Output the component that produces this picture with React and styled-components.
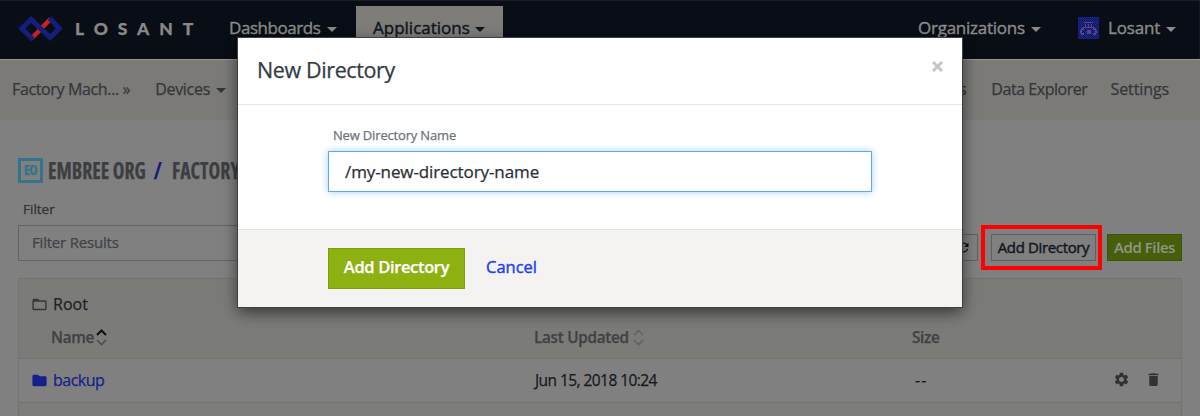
import React from 'react';
import styled, { createGlobalStyle } from 'styled-components';
import { MdSettings, MdDelete, MdFolder, MdFolderOpen, MdRefresh } from 'react-icons/md';

const GlobalStyle = createGlobalStyle`
  * { box-sizing: border-box; }
  body { margin: 0; background: #808080; font-family: "Open Sans", "Noto Sans", sans-serif; }
`;

const Page = styled.div`
  position: relative;
  width: 1200px;
  height: 416px;
  overflow: hidden;
  background: #808080;
  color: #14191f;
  font-size: 16px;
  font-weight: 400;
  -webkit-text-stroke: 0.25px currentColor;
  line-height: 22px;
  white-space: nowrap;
`;

const TopBar = styled.header`
  display: flex;
  height: 59px;
  padding-left: 18px;
  background: #080d16;
  border-top: 1px solid #1a1e25;
  border-right: 1px solid #14181f;
`;

const Brand = styled.div`
  display: flex;
  align-items: flex-start;
  width: 196px;
  svg { display: block; margin-top: 14px; }
`;

const BrandName = styled.span`
  margin: 17px 0 0 11px;
  color: #8a8987;
  font: 900 17.5px/22px Lato, sans-serif;
  letter-spacing: 9.9px;
`;

const MenuItem = styled.div`
  display: flex;
  align-items: center;
  height: 54px;
  margin-top: ${p => (p.$active ? 5 : 0)}px;
  padding: 0 ${p => (p.$active ? 17 : 15)}px ${p => (p.$active ? 10 : 0)}px;
  width: ${p => p.$width}px;
  background: ${p => (p.$active ? '#7e7d7a' : 'transparent')};
  color: ${p => (p.$active ? '#10151c' : '#8b8a88')};
  font-size: 17px;
  -webkit-text-stroke-width: 0.4px;
  letter-spacing: ${p => p.$track || 0}px;
`;

const Caret = styled.i`
  flex: none;
  width: 0;
  height: 0;
  margin: 3px 0 0 ${p => p.$gap || 7}px;
  border: 5px solid transparent;
  border-top-color: currentColor;
  border-bottom: 0;
`;

const AccountMenu = styled.div`
  display: flex;
  margin-left: auto;
`;

const Avatar = styled.svg`
  width: 21px;
  height: 22px;
  margin-right: 9px;
`;

const SubNav = styled.nav`
  display: flex;
  align-items: center;
  height: 61px;
  padding: 0 31px 3px 12px;
  border-top: 1px solid #969592;
  background: #7b7a77;
  color: #33363a;
`;

const SubNavItem = styled.span`
  display: flex;
  align-items: center;
  margin-right: ${p => p.$after || 0}px;
  margin-left: ${p => (p.$push ? 'auto' : 0)};
  letter-spacing: ${p => p.$track || 0}px;
`;

const Content = styled.main`
  padding: 36px 18px 0;
`;

const Heading = styled.h1`
  display: flex;
  align-items: center;
  height: 28px;
  margin: 0;
  color: #3c3e41;
`;

const OrgBadge = styled.span`
  display: flex;
  align-items: center;
  justify-content: center;
  width: 25px;
  height: 25px;
  border: 3px solid #34748a;
  color: #34748a;
  font: 700 14px/14px "Open Sans", sans-serif;
  font-stretch: 75%;
  letter-spacing: -0.6px;
`;

const Crumbs = styled.span`
  display: flex;
  margin-left: 5px;
  font-size: 23px;
  font-weight: 700;
  font-stretch: 75%;
  line-height: 28px;
  transform: scaleX(0.86);
  transform-origin: left center;
`;

const Slash = styled.span`
  margin: 0 12px 0 9px;
  color: #10197c;
`;

const FilterRow = styled.div`
  display: flex;
  justify-content: space-between;
  height: 77px;
  margin-top: 14px;
`;

const FilterField = styled.label`
  display: block;
  width: 420px;
  color: #2f3236;
  font-size: 13.5px;
  line-height: 22px;
  span { display: block; padding-left: 5px; }
`;

const FilterBox = styled.div`
  display: flex;
  align-items: center;
  height: 36px;
  margin-top: 5px;
  padding: 0 13px 2px;
  border: 1px solid #646466;
  color: #3f4247;
  font-size: 15px;
  letter-spacing: -0.2px;
`;

const Actions = styled.div`
  display: flex;
  align-items: flex-start;
  padding-top: 36px;
`;

const ToolButton = styled.button`
  display: flex;
  align-items: center;
  justify-content: center;
  width: ${p => p.$width}px;
  height: 27px;
  padding: 0 0 1px;
  border: 1px solid ${p => (p.$green ? '#3c5503' : '#5f6062')};
  background: ${p => (p.$green ? '#475f0a' : '#808080')};
  color: ${p => (p.$green ? '#92948b' : '#10161d')};
  font: ${p => (p.$green ? 600 : 400)} 15px/20px "Open Sans", sans-serif;
  -webkit-text-stroke: ${p => (p.$green ? 0 : 0.4)}px currentColor;
  letter-spacing: ${p => p.$track || 0}px;
`;

const Highlight = styled.div`
  width: 121px;
  height: 45px;
  margin: -9px 5px 0 3px;
  padding: 5px 0 0 6px;
  border: 4px solid #fe0000;
`;

const Table = styled.section`
  margin-top: 3px;
  border: 1px solid #737371;
  background: #808080;
`;

const TableHead = styled.div`
  height: 80px;
  padding-top: 14px;
  background: #7b7b77;
  border-bottom: 1px solid #727270;
`;

const Place = styled.div`
  display: flex;
  align-items: center;
  height: 22px;
  padding-left: 12px;
  color: #1d2226;
  svg { margin-right: 5px; color: #34373a; }
`;

const Columns = styled.div`
  display: grid;
  grid-template-columns: 515px 378px 188px 1fr;
  align-items: center;
`;

const HeadCells = styled(Columns)`
  margin-top: 11px;
  height: 22px;
  color: #3f4245;
  font-size: 15.3px;
  font-weight: 600;
  letter-spacing: -0.3px;
`;

const HeadCell = styled.span`
  display: flex;
  align-items: center;
  padding-left: ${p => p.$indent || 0}px;
`;

const SortMark = styled.svg`
  width: 11px;
  height: 17px;
  margin-left: ${p => p.$gap}px;
  fill: none;
  stroke-width: 1.6;
`;

const Row = styled(Columns)`
  height: 44px;
  padding-bottom: 1px;
  border-bottom: 1px solid #737373;
  background: ${p => (p.$alt ? '#7d7d7c' : '#808080')};
`;

const FileLink = styled.a`
  display: flex;
  align-items: center;
  padding-left: 12px;
  color: #16208a;
  letter-spacing: -0.5px;
  svg { margin-right: 5px; }
`;

const DateCell = styled.span`
  padding-left: 1px;
  font-size: 15.5px;
  letter-spacing: -0.56px;
`;

const SizeCell = styled.span`
  padding-left: 3px;
  font-size: 16px;
  letter-spacing: 1px;
`;

const RowActions = styled.span`
  display: flex;
  align-items: center;
  gap: 15px;
  padding: 0 0 2px 13px;
  color: #303336;
`;

const Modal = styled.div`
  position: absolute;
  left: 238px;
  top: 38px;
  width: 724px;
  height: 269px;
  background: #fff;
  box-shadow: 0 0 0 1px #3f4041, 0 5px 15px rgba(0, 0, 0, 0.6);
`;

const ModalHeader = styled.div`
  display: flex;
  align-items: center;
  justify-content: space-between;
  height: 67px;
  padding: 0 19px 3px;
  border-bottom: 1px solid #e5e6e6;
`;

const ModalTitle = styled.h2`
  margin: 0;
  color: #343b43;
  font-size: 21.5px;
  font-weight: 400;
  line-height: 30px;
  letter-spacing: -0.38px;
`;

const CloseMark = styled.svg`
  width: 11px;
  height: 11px;
  margin-top: -7px;
  stroke: #c3c6c9;
  stroke-width: 3;
`;

const ModalBody = styled.div`
  height: 124px;
  padding: 20px 90px 0;
`;

const FieldLabel = styled.label`
  display: block;
  padding-left: 5px;
  color: #6d747b;
  font-size: 13px;
  line-height: 20px;
  letter-spacing: -0.17px;
`;

const NameInput = styled.div`
  display: flex;
  align-items: center;
  height: 41px;
  margin-top: 6px;
  padding: 0 16px;
  border: 1px solid #62a8ea;
  color: #2a2f35;
  font-size: 17px;
  letter-spacing: -0.1px;
  box-shadow: 0 0 7px rgba(98, 176, 240, 0.6);
`;

const ModalFooter = styled.div`
  display: flex;
  align-items: center;
  height: 78px;
  padding: 0 90px;
  border-top: 1px solid #e5e5e4;
  background: #f4f3f1;
`;

const SubmitButton = styled.button`
  width: 137px;
  height: 41px;
  padding: 0 0 3px;
  border: 1px solid #7a9f08;
  background: #8db110;
  color: #fff;
  font: 600 16.5px/22px "Open Sans", sans-serif;
  letter-spacing: -0.35px;
`;

const CancelLink = styled.a`
  margin: -3px 0 0 21px;
  color: #1b3ff5;
  font-size: 16.5px;
  -webkit-text-stroke-width: 0.4px;
`;

const Sort = ({ active }) => (
  <SortMark $gap={active ? 2 : 4} viewBox="0 0 11 17">
    <path d="M1 6 5.5 1.5 10 6" stroke={active ? '#0c1117' : '#60615f'} strokeWidth={active ? 2 : 1.4} />
    <path d="M1 11 5.5 15.5 10 11" stroke={active ? '#4b4d4e' : '#60615f'} />
  </SortMark>
);

const Logo = () => (
  <svg width="46" height="28" viewBox="18 15 46 28" fill="none">
    <path d="M50.5 19 32 38" stroke="#70463c" strokeWidth="4.6" />
    <path d="M50.5 19 32 38" stroke="#f3120a" strokeWidth="4" strokeDasharray="1.8 0.7" />
    <path d="M33 39.5 21.8 28.5 31 19.4 50.2 37.6 59.3 28.5 49.5 18" stroke="#141e7d" strokeWidth="5" />
  </svg>
);

const Face = () => (
  <Avatar viewBox="0 0 21 22">
    <defs>
      <pattern id="weave" width="2" height="2" patternUnits="userSpaceOnUse">
        <rect width="2" height="2" fill="#0f1650" />
        <path d="M0 0h1v1H0zM1 1h1v1H1z" fill="#1c299a" />
      </pattern>
    </defs>
    <rect width="21" height="22" fill="url(#weave)" />
    <path
      fill="#594487"
      d="M6 5h9v1H6zM7 7h1v3H7zM10 7h1v3h-1zM13 7h1v3h-1zM5 10h11v1H5zM3 11h3v2H4v3h2v2H3v-2H2v-3h1zM15 11h3v2h1v3h-1v2h-3v-2h2v-3h-2zM9 13h4v4H9z"
    />
  </Avatar>
);

const Tools = () => (
  <RowActions>
    <MdSettings size={17} />
    <MdDelete size={17} />
  </RowActions>
);

export default function App() {
  return (
    <>
      <GlobalStyle />
      <Page>
        <TopBar>
          <Brand>
            <Logo />
            <BrandName>LOSANT</BrandName>
          </Brand>
          <MenuItem $width={142} $track={-0.45}>Dashboards<Caret /></MenuItem>
          <MenuItem $width={147} $active>Applications<Caret $gap={5} /></MenuItem>
          <AccountMenu>
            <MenuItem $width={160} $track={-0.25}>Organizations<Caret $gap={6} /></MenuItem>
            <MenuItem $width={136} $track={-0.15}><Face />Losant<Caret $gap={6} /></MenuItem>
          </AccountMenu>
        </TopBar>
        <SubNav>
          <SubNavItem $after={25} $track={-0.36}>Factory Mach... »</SubNavItem>
          <SubNavItem $track={-0.3}>Devices<Caret $gap={6} /></SubNavItem>
          <SubNavItem $push $after={25} $track={-0.3}>Files</SubNavItem>
          <SubNavItem $after={23} $track={-0.45}>Data Explorer</SubNavItem>
          <SubNavItem $track={-0.1}>Settings</SubNavItem>
        </SubNav>
        <Content>
          <Heading>
            <OrgBadge>EO</OrgBadge>
            <Crumbs>EMBREE ORG<Slash>/</Slash>FACTORY</Crumbs>
          </Heading>
          <FilterRow>
            <FilterField>
              <span>Filter</span>
              <FilterBox>Filter Results</FilterBox>
            </FilterField>
            <Actions>
              <ToolButton $width={30}><MdRefresh size={15} /></ToolButton>
              <Highlight>
                <ToolButton $width={105} $track={-0.36}>Add Directory</ToolButton>
              </Highlight>
              <ToolButton $width={75} $track={-0.42} $green>Add Files</ToolButton>
            </Actions>
          </FilterRow>
          <Table>
            <TableHead>
              <Place><MdFolderOpen size={17} />Root</Place>
              <HeadCells>
                <HeadCell $indent={32}>Name<Sort active /></HeadCell>
                <HeadCell>Last Updated<Sort /></HeadCell>
                <HeadCell>Size</HeadCell>
              </HeadCells>
            </TableHead>
            <Row>
              <FileLink><MdFolder size={17} />backup</FileLink>
              <DateCell>Jun 15, 2018 10:24</DateCell>
              <SizeCell>--</SizeCell>
              <Tools />
            </Row>
            <Row $alt>
              <span />
              <span />
              <span />
              <Tools />
            </Row>
          </Table>
        </Content>
        <Modal>
          <ModalHeader>
            <ModalTitle>New Directory</ModalTitle>
            <CloseMark viewBox="0 0 11 11"><path d="M1 1 10 10M10 1 1 10" /></CloseMark>
          </ModalHeader>
          <ModalBody>
            <FieldLabel>New Directory Name</FieldLabel>
            <NameInput>/my-new-directory-name</NameInput>
          </ModalBody>
          <ModalFooter>
            <SubmitButton>Add Directory</SubmitButton>
            <CancelLink>Cancel</CancelLink>
          </ModalFooter>
        </Modal>
      </Page>
    </>
  );
}
